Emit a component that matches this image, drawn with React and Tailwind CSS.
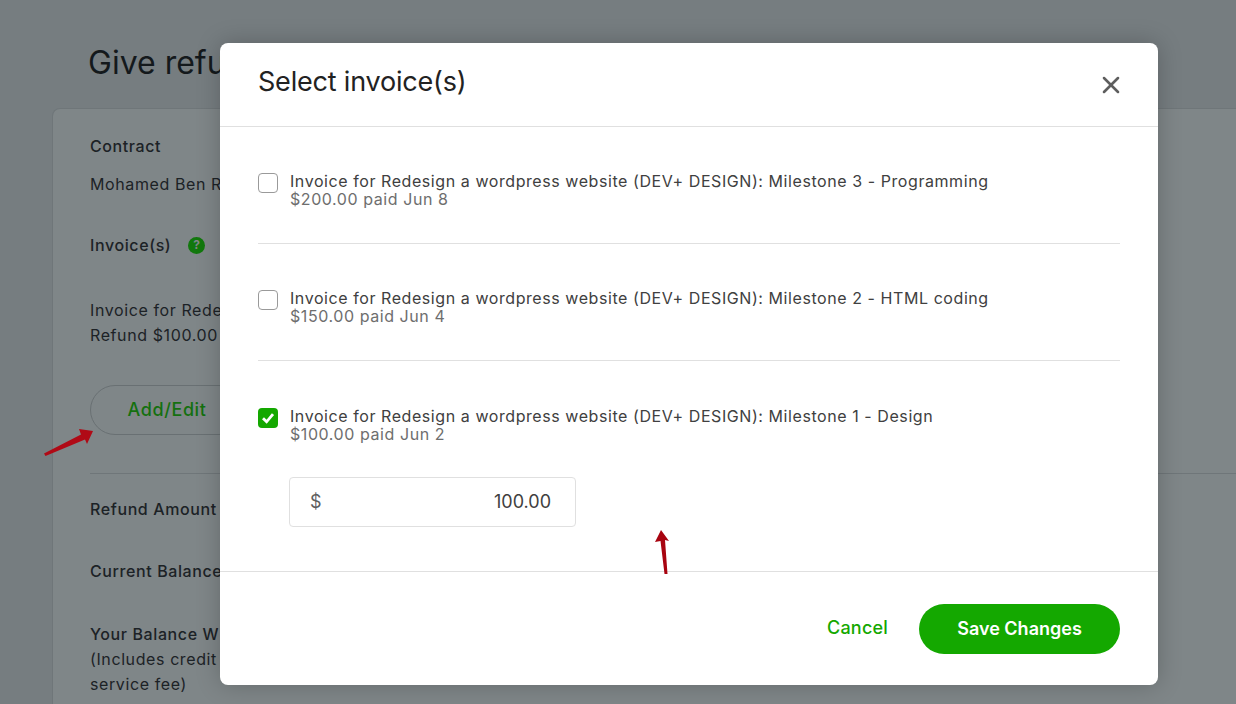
import { X } from "lucide-react"

const font = { fontFamily: '"Inter", "Liberation Sans", sans-serif' }

const invoices = [
  { title: "Invoice for Redesign a wordpress website (DEV+ DESIGN): Milestone 3 - Programming", sub: "$200.00 paid Jun 8" },
  { title: "Invoice for Redesign a wordpress website (DEV+ DESIGN): Milestone 2 - HTML coding", sub: "$150.00 paid Jun 4" },
  { title: "Invoice for Redesign a wordpress website (DEV+ DESIGN): Milestone 1 - Design", sub: "$100.00 paid Jun 2", checked: true },
]

function Checkbox({ checked }) {
  if (checked) {
    return (
      <div className="flex h-5 w-5 shrink-0 items-center justify-center rounded-[4px] bg-[#14a800]">
        <svg width="16" height="16" viewBox="0 0 16 16" fill="none">
          <path d="M3 8.2 L6.6 11.8 L13 4.2" stroke="#fff" strokeWidth="2.8" />
        </svg>
      </div>
    )
  }
  return <div className="h-5 w-5 shrink-0 rounded-[4px] border border-[#9a9a9a] bg-white" />
}

function InvoiceRow({ invoice }) {
  return (
    <div className="flex items-start gap-3">
      <div className="pt-[1px]">
        <Checkbox checked={invoice.checked} />
      </div>
      <div className="text-[16px] leading-[18px] tracking-[0.57px]">
        <div className="text-[#404040]">{invoice.title}</div>
        <div className="text-[#6e6e6e]">{invoice.sub}</div>
      </div>
    </div>
  )
}

function Arrows() {
  return (
    <>
      <svg className="absolute left-[40px] top-[425px]" width="60" height="35" viewBox="40 425 60 35">
        <path d="M44 453.5 L81 434.5 L79 429 L93 431 L87 444 L85 439.5 L45.5 456 Z" fill="#b00a16" />
      </svg>
      <svg className="absolute left-[650px] top-[526px]" width="24" height="52" viewBox="650 526 24 52">
        <path d="M661 530 L669 541 L665 540 L667.5 574 L664.5 574 L660.5 541 L655 542 Z" fill="#a80410" />
      </svg>
    </>
  )
}

export default function App() {
  return (
    <div className="relative h-[704px] w-full overflow-hidden bg-[#767d80]" style={font}>
      {/* page behind the modal */}
      <div className="pl-[52px] pt-[44px]">
        <h1 className="ml-[36px] text-[32px] leading-[38px] text-[#14191c]">Give refund</h1>
        <div className="mt-[26px] h-[640px] rounded-tl-lg border-l border-t border-[#6f7679] bg-[#7f8688] pl-[37px] pt-[27px] text-[16px] tracking-[0.6px] text-[#1c2226]">
          <div className="leading-5 font-medium">Contract</div>
          <div className="mt-[18px] leading-5">Mohamed Ben R</div>
          <div className="mt-[41px] flex items-center gap-[17px] leading-5 font-medium">
            Invoice(s)
            <span className="flex h-[17px] w-[17px] items-center justify-center rounded-full bg-[#12780d] text-[12px] font-bold text-[#7f8688]">?</span>
          </div>
          <div className="mt-[43px] leading-[25px]">
            <div>Invoice for Rede</div>
            <div>Refund $100.00</div>
          </div>
          <button className="mt-[37px] block h-[50px] w-[154px] rounded-full border border-[#697073] pb-[2px] text-[18px] font-medium tracking-[0.6px] text-[#14700f]">Add/Edit</button>
          <div className="mt-[38px] border-t border-[#6f7679]" />
          <div className="mt-[25px] leading-5 font-medium">Refund Amount</div>
          <div className="mt-[42px] leading-5 font-medium">Current Balance</div>
          <div className="mt-[41px] leading-[25px]">
            <div className="font-medium">Your Balance W</div>
            <div>(Includes credit</div>
            <div>service fee)</div>
          </div>
        </div>
      </div>

      {/* modal */}
      <div className="absolute left-[220px] top-[43px] flex h-[642px] w-[938px] flex-col rounded-lg bg-white shadow-[0_0_24px_rgba(0,0,0,0.22)]">
        <div className="flex h-[84px] items-center justify-between border-b border-[#e0e0e0] pl-[38px] pr-[33px]">
          <h2 className="-mt-[5px] text-[27px] leading-8 tracking-[-0.2px] text-[#222]">Select invoice(s)</h2>
          <X size={28} strokeWidth={2.2} className="text-[#5e5e5e]" />
        </div>

        <div className="flex-1 px-[38px]">
          <div className="border-b border-[#e0e0e0] pb-[35px] pt-[45px]">
            <InvoiceRow invoice={invoices[0]} />
          </div>
          <div className="border-b border-[#e0e0e0] pb-[35px] pt-[45px]">
            <InvoiceRow invoice={invoices[1]} />
          </div>
          <div className="pt-[46px]">
            <InvoiceRow invoice={invoices[2]} />
            <div className="ml-[31px] mt-[34px] flex h-[50px] w-[287px] items-center justify-between rounded-[4px] border border-[#e0e0e0] pb-[2px] pl-[20px] pr-[24px] text-[18px]">
              <span className="text-[#5e5e5e]">$</span>
              <span className="text-[#404040]">100.00</span>
            </div>
          </div>
        </div>

        <div className="flex h-[114px] items-center justify-end gap-[31px] border-t border-[#e0e0e0] pr-[38px]">
          <button className="-mt-[2px] text-[18px] font-medium tracking-[0.2px] text-[#14a800]">Cancel</button>
          <button className="h-[50px] w-[201px] rounded-full bg-[#14a800] text-[18px] font-semibold text-white">Save Changes</button>
        </div>
      </div>

      <Arrows />
    </div>
  )
}
